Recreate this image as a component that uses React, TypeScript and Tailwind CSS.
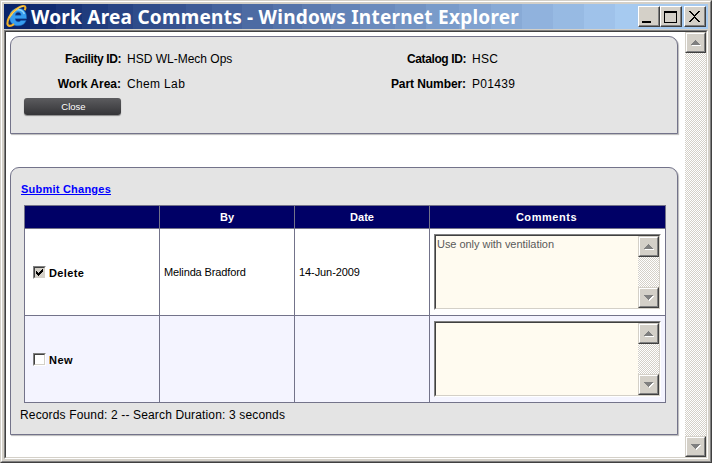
import React from "react";

const raised = "border-t border-l border-t-[#d4d0c8] border-l-[#d4d0c8] border-r border-b border-r-[#404040] border-b-[#404040]";
const bevel = "border-t border-l border-t-white border-l-white border-r border-b border-r-[#808080] border-b-[#808080] bg-[#d4d0c8]";
const sunken = "border-t border-l border-t-[#808080] border-l-[#808080] border-r border-b border-r-white border-b-white";
const sunkenInner = "border-t border-l border-t-[#404040] border-l-[#404040] border-r border-b border-r-[#d4d0c8] border-b-[#d4d0c8]";

function ArrowButton({ down = false }: { down?: boolean }) {
  return (
    <button className={`block h-[21px] w-[21px] shrink-0 ${raised}`}>
      <span className={`flex h-full w-full ${bevel}`}>
        <svg width="17" height="17" viewBox="0 0 17 17" shapeRendering="crispEdges">
          {down ? (
            <>
              <path d="M5 7h9v1h-1v1h-1v1h-1v1h-1v1h-1v-1h-1v-1H7V9H6V8H5z" fill="#fff" />
              <path d="M4 6h9v1h-1v1h-1v1h-1v1H9v1H8v-1H7V9H6V8H5V7H4z" fill="#808080" />
            </>
          ) : (
            <>
              <path d="M5 11h9v1H5z" fill="#fff" />
              <path d="M8 6h1v1h1v1h1v1h1v1h1v1H4v-1h1V9h1V8h1V7h1z" fill="#808080" />
            </>
          )}
        </svg>
      </span>
    </button>
  );
}

function ScrollBar() {
  return (
    <div className="flex w-[21px] shrink-0 flex-col justify-between bg-[conic-gradient(#fff_25%,#d4d0c8_0_50%,#fff_0_75%,#d4d0c8_0)] bg-[length:2px_2px]">
      <ArrowButton />
      <ArrowButton down />
    </div>
  );
}

function CaptionButton({ children }: { children: React.ReactNode }) {
  return (
    <button className="block h-[21px] w-[22px] border-t border-l border-r border-b border-t-white border-l-white border-r-[#404040] border-b-[#404040]">
      <span className="block h-full w-full border-r border-b border-r-[#808080] border-b-[#808080] bg-[#d4d0c8]">
        <svg width="19" height="18" viewBox="0 0 19 18" shapeRendering="crispEdges">{children}</svg>
      </span>
    </button>
  );
}

function ExplorerLogo() {
  return (
    <svg width="26" height="25" viewBox="0 0 26 25" className="shrink-0">
      <path d="M22.600 14.800H11.200c.2 2 1.400 3 3 3 1.300 0 2.100-.5 2.600-1.300h5.400c-1.200 3.300-4.200 5.300-8.100 5.300-5.300 0-8.600-3.400-8.600-8.800C5.500 7.700 9 4.200 14.200 4.200c5.400 0 8.700 3.800 8.400 10.600zM11.300 11.200h5.800c-.1-1.900-1.200-3-2.900-3-1.600 0-2.700 1.100-2.900 3z" fill="#369df0" stroke="#1762b8" strokeWidth=".5" />
      <path d="M7.300 11.500C8 8 10.500 5.800 14 5.800c3.100 0 5.400 1.600 6.300 4.200" fill="none" stroke="#8fd6fb" strokeWidth="1.500" />
      <path d="M20.600 6.200C22 3.800 21.600 2 19.700 2 15 2 8 7.800 5 13.600c-2.300 4.600-2.200 8.300.7 8.300 1.400 0 2.900-.7 4.400-1.700" fill="none" stroke="#efb12b" strokeWidth="2.100" />
      <path d="M19 2.200C14.500 3 8.200 8.400 5.400 14" fill="none" stroke="#ffe27a" strokeWidth=".7" />
    </svg>
  );
}

function Field({ label, value, labelClass = "", valueClass = "" }: { label: string; value: string; labelClass?: string; valueClass?: string }) {
  return (
    <div className="flex h-[25px] items-center whitespace-nowrap">
      <div className="flex w-[110px] justify-end font-bold"><span className={labelClass}>{label}</span></div>
      <div className="pl-[6px]"><span className={valueClass}>{value}</span></div>
    </div>
  );
}

function CommentBox({ text }: { text: string }) {
  return (
    <div className={`ml-1 mt-[5px] h-[76px] w-[227px] ${sunken}`}>
      <div className={`flex h-full w-full bg-[#fffbf0] ${sunkenInner}`}>
        <div className="flex-1 pl-px pt-[2px] text-[11px] leading-[13px] tracking-[-0.04px] text-[#5a5a5a]">{text}</div>
        <ScrollBar />
      </div>
    </div>
  );
}

function CheckBox({ checked = false }: { checked?: boolean }) {
  return (
    <span className={`block h-[13px] w-[13px] ${sunken}`}>
      <span className={`block h-full w-full ${checked ? "bg-[#d4d0c8]" : "bg-white"} ${sunkenInner}`}>
        {checked && (
          <svg width="9" height="9" viewBox="0 0 9 9" shapeRendering="crispEdges">
            <path d="M1 3h1v1h1v1h1V4h1V3h1V2h1V1h1v3H7v1H6v1H5v1H4v1H3V7H2V6H1z" fill="#000" />
          </svg>
        )}
      </span>
    </span>
  );
}

// The caption fades from navy to light blue in flat bands.
const bands = [0, 26, 52, 78, 104, 129, 156, 182, 208, 238, 269, 298, 327, 356, 391, 422, 455, 487, 518, 549, 580, 611];
const mix = (a: number, b: number, t: number) => Math.round(a + (b - a) * t);
const captionFill = `linear-gradient(to right, ${bands
  .map((start, i) => {
    const t = i / (bands.length - 1);
    const end = i + 1 < bands.length ? bands[i + 1] : 704;
    return `rgb(${mix(10, 166, t)},${mix(36, 202, t)},${mix(106, 240, t)}) ${start}px ${end}px`;
  })
  .join(", ")})`;

const panel = "ml-1 w-[668px] rounded-t-[9px] border border-[#73738a] bg-[#e4e4e4] shadow-[1px_1px_1px_#bbb]";

export default function App() {
  return (
    <div className="h-[463px] w-[712px] border-t border-l border-r border-b border-t-[#d4d0c8] border-l-[#d4d0c8] border-r-[#404040] border-b-[#404040] font-['Liberation_Sans',Arial,sans-serif] text-[12px] text-black">
      <div className="h-full w-full border-t border-l border-r border-b border-t-white border-l-white border-r-[#808080] border-b-[#808080] bg-[#d4d0c8] p-[2px]">
        <header className="flex h-[25px] items-center" style={{ backgroundImage: captionFill }}>
          <ExplorerLogo />
          <h1 className="ml-px w-[500px] whitespace-nowrap pt-[2px] font-['Noto_Sans',sans-serif] text-[19px] font-bold leading-[25px] tracking-[0.24px] text-white">Work Area Comments - Windows Internet Explorer</h1>
          <div className="ml-auto mr-[2px] flex">
            <CaptionButton><path d="M3 14h9v2H3z" /></CaptionButton>
            <CaptionButton><path d="M3 4h13v12H3zM4 6v9h11V6z" fillRule="evenodd" /></CaptionButton>
            <span className="w-[2px]" />
            <CaptionButton><path d="M4 4h2v1h1v1h1v1h1v1h1V7h1V6h1V5h1V4h2v1h-1v1h-1v1h-1v1h-1v1h-1v1h1v1h1v1h1v1h1v1h1v1h-2v-1h-1v-1h-1v-1h-1v-1H9v1H8v1H7v1H6v1H4v-1h1v-1h1v-1h1v-1h1v-1h1V9H8V8H7V7H6V6H5V5H4z" /></CaptionButton>
          </div>
        </header>
        <div className={`mt-px h-[429px] w-[704px] ${sunken}`}>
          <div className={`flex h-full w-full bg-white ${sunkenInner}`}>
            <main className="min-w-0 flex-1 pt-1">
              <section className={`h-[98px] pt-[9px] ${panel}`}>
                <div className="flex">
                  <div className="w-[345px]">
                    <Field label="Facility ID:" value="HSD WL-Mech Ops" labelClass="tracking-[-0.4px]" />
                    <Field label="Work Area:" value="Chem Lab" valueClass="tracking-[0.35px]" />
                  </div>
                  <div>
                    <Field label="Catalog ID:" value="HSC" labelClass="tracking-[-0.4px]" valueClass="tracking-[0.3px]" />
                    <Field label="Part Number:" value="P01439" labelClass="tracking-[-0.08px]" valueClass="tracking-[0.3px]" />
                  </div>
                </div>
                <button className="ml-[13px] mt-[2px] block h-[17px] w-[97px] rounded-[3px] bg-linear-to-b from-[#5c5c5f] to-[#353538] pb-px text-[9.500px] leading-[15px] text-white shadow-[0_1px_1px_#888]"><span className="pl-[2px]">Close</span></button>
              </section>
              <section className={`mt-[33px] h-[268px] ${panel}`}>
                <a className="ml-[10px] mt-[14px] block h-[15px] w-fit text-[11px] font-bold leading-[15px] tracking-[0.23px] text-[#0000ff] underline">Submit Changes</a>
                <div className="ml-[13px] mt-[8px] grid h-[198px] w-[642px] grid-cols-[134px_134px_134px_235px] grid-rows-[22px_86px_86px] gap-px border border-[#73738a] bg-[#73738a] text-[11px] *:bg-white">
                  {["", "By", "Date", "Comments"].map((h) => (
                    <div key={h} className={`bg-[#000066]! text-center font-bold leading-[22px] text-white ${h === "Comments" ? "pr-[2px] tracking-[0.55px]" : ""}`}>{h}</div>
                  ))}
                  <div className="flex items-center gap-[3px] pl-2 font-bold"><CheckBox checked /><span className="pt-[3px] tracking-[0.35px]">Delete</span></div>
                  <div className="flex items-center pl-1 tracking-[-0.13px]">Melinda Bradford</div>
                  <div className="flex items-center pl-1 tracking-[-0.08px]">14-Jun-2009</div>
                  <div><CommentBox text="Use only with ventilation" /></div>
                  <div className="flex items-center gap-[3px] bg-[#f4f4ff]! pl-2 font-bold"><CheckBox /><span className="pt-[3px] tracking-[0.5px]">New</span></div>
                  <div className="bg-[#f4f4ff]!" />
                  <div className="bg-[#f4f4ff]!" />
                  <div className="bg-[#f4f4ff]!"><CommentBox text="" /></div>
                </div>
                <p className="ml-[9px] mt-[4px] leading-[16px] tracking-[0.15px]">Records Found: 2 -- Search Duration: 3 seconds</p>
              </section>
            </main>
            <ScrollBar />
          </div>
        </div>
      </div>
    </div>
  );
}
